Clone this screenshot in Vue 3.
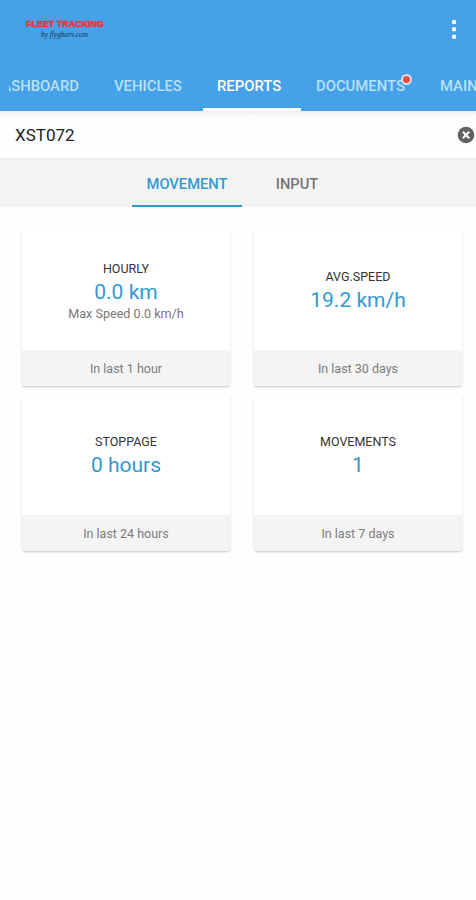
<template>
  <div class="app">
    <header class="app-bar">
      <div class="toolbar">
        <svg class="logo" viewBox="0 0 84 28" width="84" height="28">
          <text class="logo-title" x="2" y="10" textLength="78" lengthAdjust="spacingAndGlyphs">FLEET TRACKING</text>
          <text class="logo-sub" x="17" y="19.5" textLength="47" lengthAdjust="spacingAndGlyphs">by flyghars.com</text>
        </svg>
        <svg class="more" viewBox="0 0 6 22" width="6" height="22">
          <rect x="1" y="2" width="4" height="4" rx="1" />
          <rect x="1" y="9.3" width="4" height="4" rx="1" />
          <rect x="1" y="16.8" width="4" height="4" rx="1" />
        </svg>
      </div>
      <nav class="tabs">
        <div
          v-for="tab in tabs"
          :key="tab.name"
          class="tab"
          :class="[tab.name.toLowerCase(), { active: tab.name === activeTab }]"
        >
          <span class="tab-label">{{ tab.name }}</span>
          <i v-if="tab.badge" class="badge"></i>
        </div>
      </nav>
    </header>

    <div class="search">
      <span>XST072</span>
      <svg viewBox="0 0 18 18" width="18" height="18">
        <circle cx="9" cy="9" r="8.3" fill="#626262" />
        <path d="M5.8 5.8l6.4 6.4M12.2 5.8l-6.4 6.4" stroke="#fff" stroke-width="2.2" />
      </svg>
    </div>

    <nav class="sub-tabs">
      <div class="sub-tab active">MOVEMENT</div>
      <div class="sub-tab">INPUT</div>
    </nav>

    <main class="cards">
      <section v-for="card in cards" :key="card.title" class="card">
        <div class="card-body">
          <div class="card-title">{{ card.title }}</div>
          <div class="card-value">{{ card.value }}</div>
          <div v-if="card.note" class="card-note">{{ card.note }}</div>
        </div>
        <div class="card-footer">{{ card.period }}</div>
      </section>
    </main>
  </div>
</template>

<script setup>
import { ref } from 'vue';

const activeTab = ref('REPORTS');

const tabs = [
  { name: 'DASHBOARD' },
  { name: 'VEHICLES' },
  { name: 'REPORTS' },
  { name: 'DOCUMENTS', badge: true },
  { name: 'MAINTENANCE' }
];

const cards = [
  { title: 'HOURLY', value: '0.0 km', note: 'Max Speed 0.0 km/h', period: 'In last 1 hour' },
  { title: 'AVG.SPEED', value: '19.2 km/h', period: 'In last 30 days' },
  { title: 'STOPPAGE', value: '0 hours', period: 'In last 24 hours' },
  { title: 'MOVEMENTS', value: '1', period: 'In last 7 days' }
];
</script>

<style>
body {
  margin: 0;
  background: #fefefe;
}
</style>

<style scoped>
.app {
  height: 900px;
  overflow: hidden;
  background: #fefefe;
  font-family: Roboto, "Liberation Sans", sans-serif;
}

.app-bar {
  height: 111px;
  background: #45a1e8;
}

.toolbar {
  display: flex;
  justify-content: space-between;
  align-items: center;
  height: 60px;
  box-sizing: border-box;
  padding: 2px 19px 0 24px;
}

.logo-title {
  font-family: "Liberation Sans", sans-serif;
  font-size: 9px;
  font-weight: 700;
  fill: #e8373b;
  stroke: #e8373b;
  stroke-width: 0.6px;
}

.logo-sub {
  font-family: "Liberation Serif", serif;
  font-size: 8.5px;
  font-style: italic;
  fill: #17354f;
}

.more {
  margin-top: -4px;
  fill: #fff;
}

.tabs {
  display: flex;
  height: 51px;
  overflow: hidden;
}

.tab {
  position: relative;
  flex: none;
  display: flex;
  box-sizing: border-box;
  height: 51px;
  padding: 0 20px 0 14px;
  border-bottom: 3px solid transparent;
  font-size: 14.85px;
  font-weight: 500;
  line-height: 52px;
  white-space: nowrap;
  color: #b9e0fa;
}

.tab.active {
  border-bottom-color: #fff;
  color: #fff;
}

/* the strip is scrolled, so the first tab is cut on its left */
.dashboard {
  width: 100px;
  padding-left: 9px;
}

.dashboard .tab-label {
  display: flex;
  justify-content: flex-end;
  width: 70px;
  overflow: hidden;
}

.vehicles {
  width: 103px;
}

.reports {
  width: 98px;
}

.documents {
  width: 125px;
  padding-left: 15px;
}

.badge {
  position: absolute;
  top: 14px;
  left: 100px;
  width: 7px;
  height: 7px;
  border: 2px solid #d5e3ee;
  border-radius: 50%;
  background: #ee4b43;
}

.search {
  display: flex;
  justify-content: space-between;
  align-items: center;
  height: 47px;
  padding: 0 1px 0 15px;
  background: linear-gradient(#ececec, #fafafa 5px, #fefefe 10px);
  font-size: 17px;
  color: #222;
}

.sub-tabs {
  display: flex;
  justify-content: center;
  height: 49px;
  box-sizing: border-box;
  padding-left: 8px;
  border-top: 2px solid #efefef;
  background: #f4f4f4;
}

.sub-tab {
  width: 110px;
  height: 47px;
  box-sizing: border-box;
  border-bottom: 2px solid transparent;
  font-size: 14.7px;
  font-weight: 500;
  line-height: 49px;
  text-align: center;
  color: #757575;
}

.sub-tab.active {
  border-bottom-color: #3299d0;
  color: #3299d0;
}

.cards {
  display: grid;
  grid-template-columns: 208px 208px;
  gap: 9px 24px;
  padding: 23px 22px;
}

.card {
  height: 156px;
  border-radius: 2px;
  background: #fff;
  box-shadow: 0 1px 2px rgba(0, 0, 0, 0.22);
}

.card-body {
  display: flex;
  flex-direction: column;
  align-items: center;
  justify-content: center;
  height: 120px;
  box-sizing: border-box;
  padding-top: 1px;
}

.card-title {
  font-size: 12.5px;
  line-height: 18px;
  color: #333;
}

.card-value {
  font-size: 21px;
  line-height: 28px;
  color: #3299d0;
}

.card-note {
  font-size: 12.6px;
  line-height: 16px;
  color: #777;
}

.card-footer {
  height: 36px;
  border-radius: 0 0 2px 2px;
  background: #f4f4f4;
  font-size: 12.5px;
  line-height: 37px;
  text-align: center;
  color: #7c7c7c;
}
</style>
